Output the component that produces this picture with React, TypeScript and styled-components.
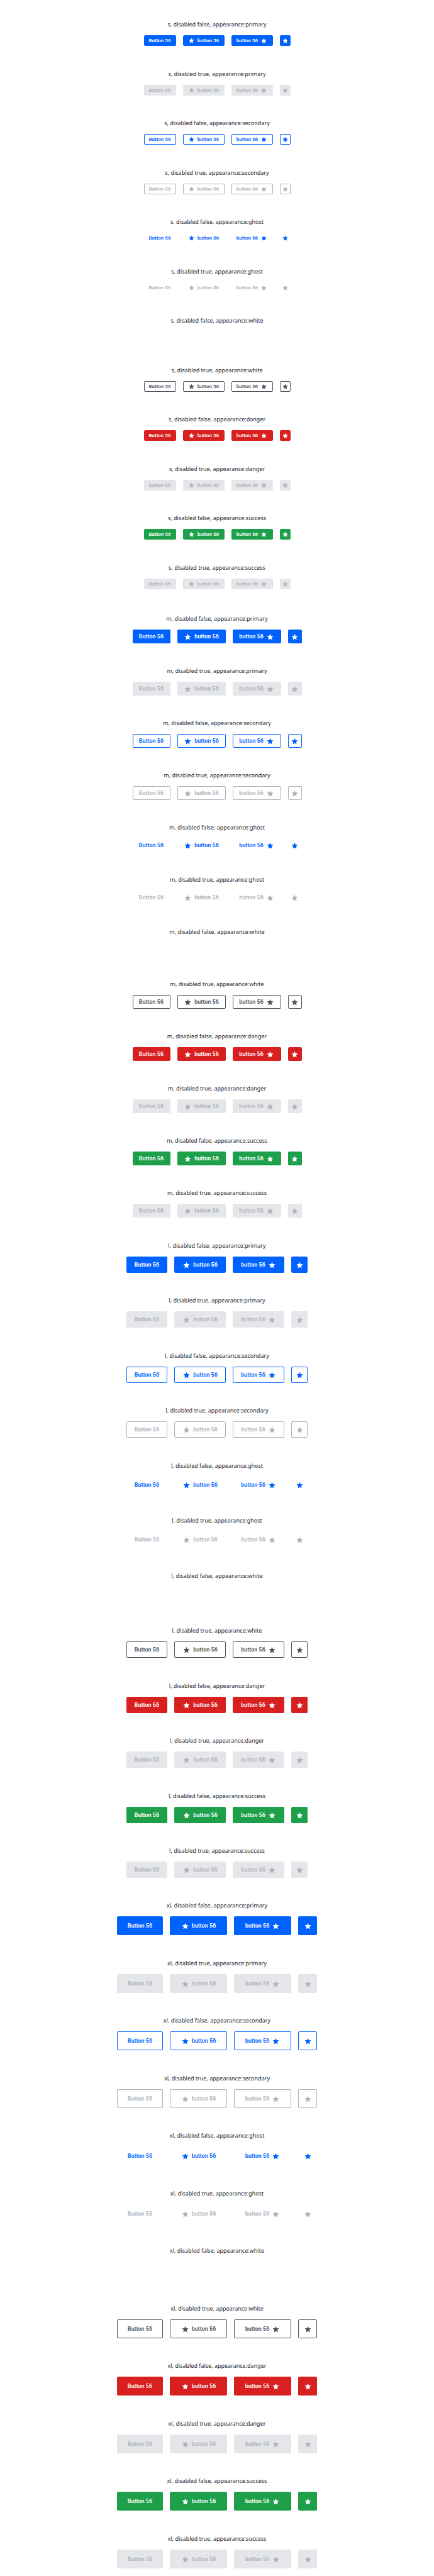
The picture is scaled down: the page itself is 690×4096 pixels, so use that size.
import React from "react";
import styled, { createGlobalStyle, css } from "styled-components";

type Size = "s" | "m" | "l" | "xl";
type Appearance = "primary" | "secondary" | "ghost" | "white" | "danger" | "success";

const sizes: Size[] = ["s", "m", "l", "xl"];
const appearances: Appearance[] = ["primary", "secondary", "ghost", "white", "danger", "success"];

interface Metrics {
  height: number;
  text: number;
  withIcon: number;
  font: number;
  icon: number;
  rowGap: number;
  pairGap: number;
  sectionGap: number;
}

const metrics: Record<Size, Metrics> = {
  s: { height: 17, text: 51, withIcon: 66, font: 8, icon: 11, rowGap: 39, pairGap: 38, sectionGap: 41 },
  m: { height: 22, text: 60, withIcon: 77, font: 9, icon: 13, rowGap: 38, pairGap: 38, sectionGap: 39 },
  l: { height: 26, text: 65, withIcon: 82, font: 9, icon: 13, rowGap: 38, pairGap: 39, sectionGap: 38 },
  xl: { height: 30, text: 73, withIcon: 91, font: 9, icon: 13, rowGap: 39, pairGap: 38, sectionGap: 11 },
};

interface Palette {
  background: string;
  border: string;
  color: string;
}

const muted: Palette = { background: "#e5e6ea", border: "#e5e6ea", color: "#afb2ba" };

const palettes: Record<Appearance, { enabled: Palette; disabled: Palette }> = {
  primary: {
    enabled: { background: "#0062ff", border: "#0062ff", color: "#ffffff" },
    disabled: muted,
  },
  secondary: {
    enabled: { background: "transparent", border: "#0062ff", color: "#0062ff" },
    disabled: { background: "transparent", border: "#afb2ba", color: "#afb2ba" },
  },
  ghost: {
    enabled: { background: "transparent", border: "transparent", color: "#0062ff" },
    disabled: { background: "transparent", border: "transparent", color: "#afb2ba" },
  },
  white: {
    enabled: { background: "#ffffff", border: "#ffffff", color: "#ffffff" },
    disabled: { background: "transparent", border: "#50535b", color: "#50535b" },
  },
  danger: {
    enabled: { background: "#d92020", border: "#d92020", color: "#ffffff" },
    disabled: muted,
  },
  success: {
    enabled: { background: "#1ea04a", border: "#1ea04a", color: "#ffffff" },
    disabled: muted,
  },
};

const GlobalStyle = createGlobalStyle`
  *, *::before, *::after { box-sizing: border-box; }
  body {
    margin: 0;
    background: #ffffff;
    color: #24262d;
    font-family: "Noto Sans", "Open Sans", sans-serif;
  }
`;

const Page = styled.main`
  display: flex;
  flex-direction: column;
  padding-top: 33px;
`;

const SizeSection = styled.section<{ $size: Size }>`
  display: flex;
  flex-direction: column;
  gap: ${(p) => metrics[p.$size].pairGap}px;
  padding-bottom: ${(p) => metrics[p.$size].sectionGap}px;
`;

const AppearancePair = styled.div<{ $size: Size }>`
  display: flex;
  flex-direction: column;
  gap: ${(p) => metrics[p.$size].rowGap}px;
`;

const Example = styled.div`
  display: flex;
  flex-direction: column;
  align-items: center;
  gap: 11px;
`;

const Caption = styled.p`
  margin: 0;
  font-size: 9px;
  line-height: 12px;
  white-space: nowrap;
`;

const ButtonRow = styled.div`
  display: flex;
  gap: 11px;
`;

const Button = styled.button<{ $size: Size; $appearance: Appearance; $kind: "text" | "withIcon" | "icon" }>`
  ${({ $size, $kind, $appearance }) => {
    const m = metrics[$size];
    const { enabled, disabled } = palettes[$appearance];
    return css`
      display: inline-flex;
      align-items: center;
      justify-content: center;
      gap: 4px;
      height: ${m.height}px;
      min-width: ${$kind === "icon" ? m.height : m[$kind]}px;
      padding: 0;
      border: 1px solid ${enabled.border};
      border-radius: 2px;
      background: ${enabled.background};
      color: ${enabled.color};
      font-family: Roboto, "Noto Sans", sans-serif;
      font-size: ${m.font}px;
      font-weight: 600;
      line-height: 12px;
      white-space: nowrap;
      cursor: pointer;

      &:disabled {
        border-color: ${disabled.border};
        background: ${disabled.background};
        color: ${disabled.color};
        cursor: default;
      }
    `;
  }}
`;

const StarIcon = styled.svg<{ $size: Size }>`
  flex: none;
  width: ${(p) => metrics[p.$size].icon}px;
  height: ${(p) => metrics[p.$size].icon}px;
  fill: currentColor;
`;

const Star = ({ size }: { size: Size }) => (
  <StarIcon $size={size} viewBox="-1 -1.5 26 26" aria-hidden="true">
    <path d="M12 17.8 18.18 21 16.8 14 22 9.1 14.9 8.6 12 2 9.1 8.6 2 9.1 7.2 14 5.82 21Z" />
  </StarIcon>
);

const ButtonExample = ({ size, appearance, disabled }: { size: Size; appearance: Appearance; disabled: boolean }) => {
  const shared = { type: "button" as const, $size: size, $appearance: appearance, disabled };
  return (
    <Example>
      <Caption>{`${size}, disabled ${disabled}, appearance:${appearance}`}</Caption>
      <ButtonRow>
        <Button {...shared} $kind="text">
          Button 56
        </Button>
        <Button {...shared} $kind="withIcon">
          <Star size={size} />
          button 56
        </Button>
        <Button {...shared} $kind="withIcon">
          button 56
          <Star size={size} />
        </Button>
        <Button {...shared} $kind="icon" aria-label="Favourite">
          <Star size={size} />
        </Button>
      </ButtonRow>
    </Example>
  );
};

export default function App() {
  return (
    <>
      <GlobalStyle />
      <Page>
        {sizes.map((size) => (
          <SizeSection key={size} $size={size}>
            {appearances.map((appearance) => (
              <AppearancePair key={appearance} $size={size}>
                <ButtonExample size={size} appearance={appearance} disabled={false} />
                <ButtonExample size={size} appearance={appearance} disabled />
              </AppearancePair>
            ))}
          </SizeSection>
        ))}
      </Page>
    </>
  );
}
